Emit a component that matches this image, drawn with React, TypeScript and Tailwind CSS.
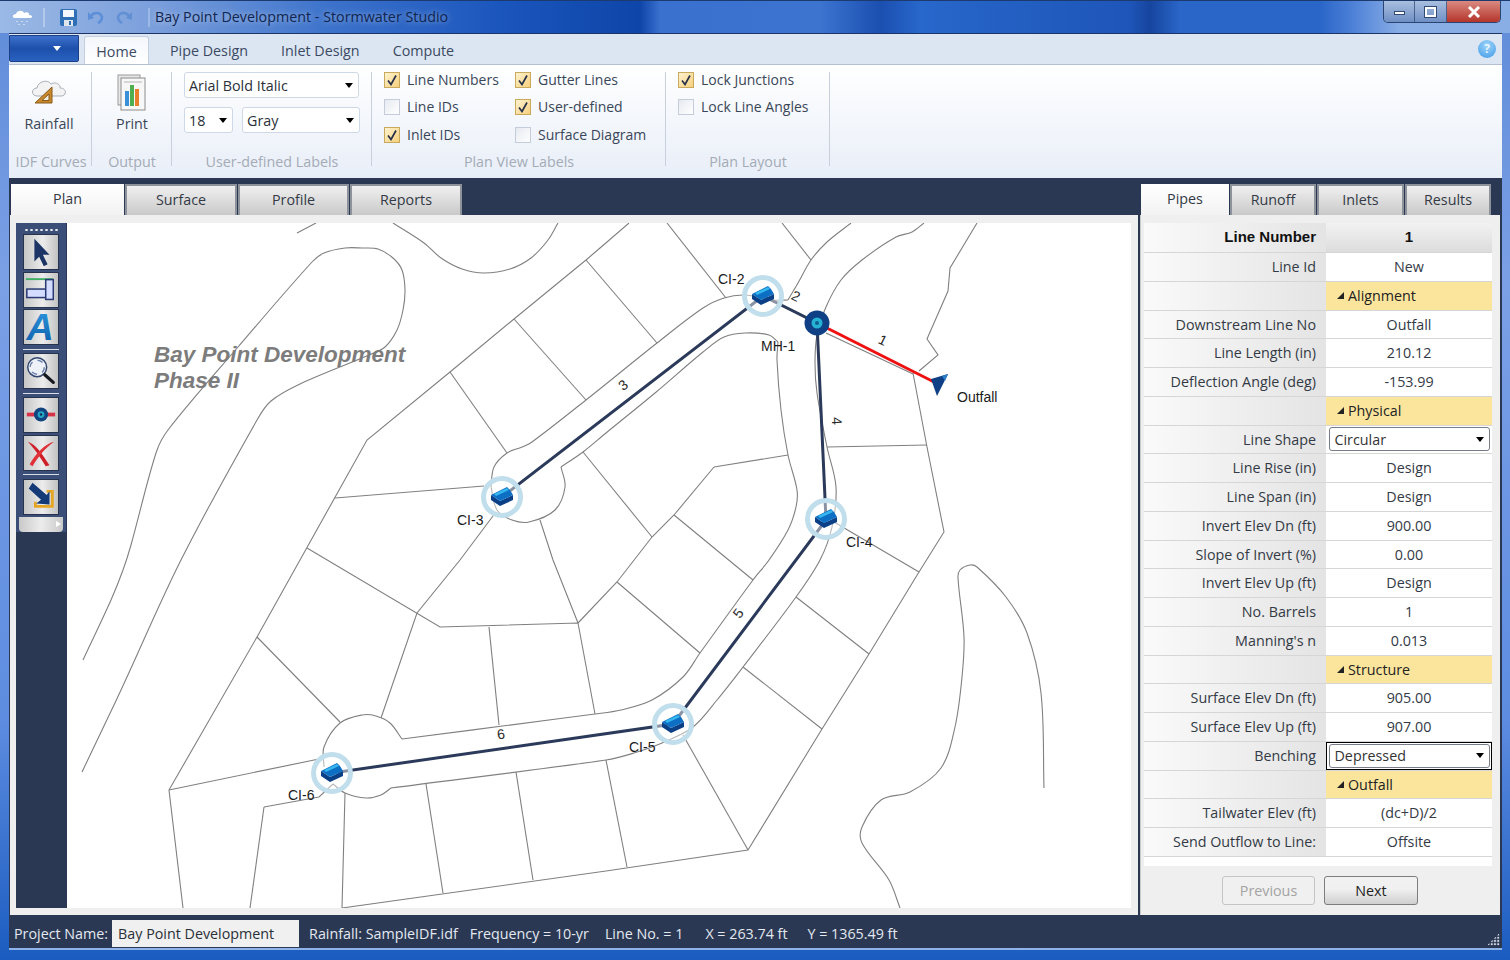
const UI_FONT = "font-['Open_Sans',sans-serif]";

// straight parcel and lot lines, in page coordinates
const parcels: string[] = [
  "297,233 316,223",
  "629,223 600,248 586,260 514,319 450,372 367,440 300,560 257,637 169,790 183,908",
  "450,372 507,453",
  "514,319 586,400",
  "586,260 657,343",
  "335,498 484,486",
  "307,548 440,627 578,623 595,714",
  "496,512 460,560 417,613 381,718",
  "583,452 652,537",
  "540,520 553,560 578,623",
  "714,467 788,455",
  "714,467 674,515 652,537 617,582 578,623",
  "674,515 753,580",
  "617,582 700,653",
  "489,627 499,725",
  "257,637 340,722",
  "169,790 319,759",
  "264,807 250,908",
  "264,807 319,797 333,784",
  "345,793 342,908 606,871 748,850 822,729 869,654 919,572 944,532 927,447 913,373",
  "426,784 443,893",
  "516,772 533,880",
  "606,760 627,867",
  "683,735 748,850",
  "827,447 927,445",
  "834,522 919,572",
  "796,597 869,654",
  "743,667 822,729",
  "667,223 726,298",
  "782,223 811,260",
  "977,223 950,268 948,291 927,339 938,355 919,371",
  "826,333 913,374",
];

// road edges and shoreline, drawn as smooth curves
const curves: number[][][] = [
  [[393,223],[424,243],[441,258],[462,269],[484,273],[510,269],[531,258],[548,240],[558,223]],
  [[83,660],[111,600],[123,570],[131,545],[156,453],[168,430],[238,347],[312,262],[324,253],[345,248],[362,248],[378,249],[393,258],[402,270],[405,290],[403,310],[397,330],[385,347],[369,355],[300,384],[271,401],[257,420],[181,560],[121,690],[82,772]],
  [[491,487],[494,467],[507,453],[522,447],[532,442],[586,400],[657,343],[703,308],[724,298],[745,295],[772,300],[788,300]],
  [[788,300],[798,283],[811,260],[827,242],[851,223]],
  [[491,487],[497,510],[512,520],[529,522],[555,510],[565,487],[561,467]],
  [[561,467],[583,452],[606,433],[655,393],[703,352],[724,337],[745,333],[769,335],[778,342]],
  [[778,342],[777,360],[781,410],[788,455],[797,490],[796,507],[788,530],[769,560],[753,580],[700,653],[683,677],[652,700],[621,710],[595,714],[402,739]],
  [[402,739],[390,723],[376,716],[362,715],[340,723],[324,747],[324,767]],
  [[333,784],[345,793],[366,798],[381,795],[391,788]],
  [[391,788],[606,760],[634,753],[662,743],[693,727],[717,700],[743,667],[796,597],[820,560],[832,527],[836,487],[827,447],[817,393],[815,363],[817,335],[826,307],[841,280],[862,260],[896,237],[912,232],[924,223]],
  [[900,908],[889,880],[862,843],[862,827],[881,800],[910,792],[941,768],[955,727],[962,677],[964,637],[958,578],[960,570],[970,565],[977,567],[1006,597],[1027,633],[1041,693],[1044,788]],
];

function smoothPath(pts: number[][]) {
  const tangent = (i: number) => {
    const a = pts[Math.max(i - 1, 0)];
    const b = pts[Math.min(i + 1, pts.length - 1)];
    const len = Math.hypot(b[0] - a[0], b[1] - a[1]) || 1;
    return [(b[0] - a[0]) / len, (b[1] - a[1]) / len];
  };
  let d = `M${pts[0][0]} ${pts[0][1]}`;
  for (let i = 0; i < pts.length - 1; i++) {
    const p = pts[i];
    const q = pts[i + 1];
    const len = Math.hypot(q[0] - p[0], q[1] - p[1]) / 3;
    const t1 = tangent(i);
    const t2 = tangent(i + 1);
    d += ` C${p[0] + t1[0] * len} ${p[1] + t1[1] * len} ${q[0] - t2[0] * len} ${q[1] - t2[1] * len} ${q[0]} ${q[1]}`;
  }
  return d;
}

const inlets = [
  { x: 763, y: 296 },
  { x: 502, y: 497 },
  { x: 826, y: 519 },
  { x: 673, y: 724 },
  { x: 332, y: 773 },
];

const nameLabels = [
  { text: "CI-2", x: 718, y: 284 },
  { text: "CI-3", x: 457, y: 525 },
  { text: "CI-4", x: 846, y: 547 },
  { text: "CI-5", x: 629, y: 752 },
  { text: "CI-6", x: 288, y: 800 },
  { text: "MH-1", x: 761, y: 351 },
  { text: "Outfall", x: 957, y: 402 },
];

const lineNumbers = [
  { text: "1", x: 883, y: 345, r: 26 },
  { text: "2", x: 796, y: 301, r: 26 },
  { text: "3", x: 623, y: 390, r: -38 },
  { text: "4", x: 837, y: 426, r: 87 },
  { text: "5", x: 738, y: 618, r: -53 },
  { text: "6", x: 501, y: 739, r: -8 },
];

type Row =
  | { kind: "head"; label: string; value: string }
  | { kind: "text"; label: string; value: string }
  | { kind: "section"; value: string }
  | { kind: "select"; label: string; value: string; focus?: boolean };

const rows: Row[] = [
  { kind: "head", label: "Line Number", value: "1" },
  { kind: "text", label: "Line Id", value: "New" },
  { kind: "section", value: "Alignment" },
  { kind: "text", label: "Downstream Line No", value: "Outfall" },
  { kind: "text", label: "Line Length (in)", value: "210.12" },
  { kind: "text", label: "Deflection Angle (deg)", value: "-153.99" },
  { kind: "section", value: "Physical" },
  { kind: "select", label: "Line Shape", value: "Circular" },
  { kind: "text", label: "Line Rise (in)", value: "Design" },
  { kind: "text", label: "Line Span (in)", value: "Design" },
  { kind: "text", label: "Invert Elev Dn (ft)", value: "900.00" },
  { kind: "text", label: "Slope of Invert (%)", value: "0.00" },
  { kind: "text", label: "Invert Elev Up (ft)", value: "Design" },
  { kind: "text", label: "No. Barrels", value: "1" },
  { kind: "text", label: "Manning's n", value: "0.013" },
  { kind: "section", value: "Structure" },
  { kind: "text", label: "Surface Elev Dn (ft)", value: "905.00" },
  { kind: "text", label: "Surface Elev Up (ft)", value: "907.00" },
  { kind: "select", label: "Benching", value: "Depressed", focus: true },
  { kind: "section", value: "Outfall" },
  { kind: "text", label: "Tailwater Elev (ft)", value: "(dc+D)/2" },
  { kind: "text", label: "Send Outflow to Line:", value: "Offsite" },
];

function Arrow() {
  return <span className="h-0 w-0 border-x-[4px] border-t-[5px] border-x-transparent border-t-black" />;
}

function Combo({ label, className }: { label: string; className: string }) {
  return (
    <div className={`flex h-[26px] items-center justify-between rounded-[3px] border border-[#cfd8e6] bg-white pl-[4px] pr-[5px] text-[14.3px] text-[#2a2f38] ${className}`}>
      <span className="pt-px">{label}</span>
      <Arrow />
    </div>
  );
}

function Check({ label, checked }: { label: string; checked?: boolean }) {
  return (
    <div className="flex h-[27px] items-center gap-[7px] whitespace-nowrap text-[14px] text-[#3a4658]">
      {checked ? (
        <span className="flex h-[16px] w-[16px] items-center justify-center border border-[#c9a95c] bg-[linear-gradient(135deg,#fff3d0,#f6cf7c)]">
          <svg width="12" height="12" viewBox="0 0 12 12">
            <path d="M2 6.5 L5 10.5 L10 1.5" fill="none" stroke="#26304a" strokeWidth="1.7" />
          </svg>
        </span>
      ) : (
        <span className="h-[16px] w-[16px] border border-[#c5cddb] bg-[linear-gradient(135deg,#e6eaf0,#ffffff)]" />
      )}
      <span>{label}</span>
    </div>
  );
}

function RibbonGroup({ label, width, children }: { label: string; width: string; children: React.ReactNode }) {
  return (
    <div className={`relative flex h-full flex-col ${width}`}>
      <div className="flex-1">{children}</div>
      <div className="h-[28px] pt-[1px] text-center text-[14.3px] text-[#a4abb6]">{label}</div>
      <span className="absolute right-0 top-[7px] h-[94px] w-px bg-[#c8d0dc]" />
    </div>
  );
}

function Tab({ label, width, active }: { label: string; width: string; active?: boolean }) {
  return (
    <div
      className={`flex h-[31px] items-center justify-center pb-[2px] text-[14.3px] text-[#333a45] ${width} ${
        active
          ? "bg-[linear-gradient(180deg,#ffffff,#f2f2f2)]"
          : "border-x-2 border-t-2 border-[#8e929a] bg-[linear-gradient(180deg,#f0f0f0,#c9c9c9)]"
      }`}
    >
      {label}
    </div>
  );
}

function ToolButton({ children }: { children: React.ReactNode }) {
  return (
    <div className="h-[36px] w-[36px] border border-[#26324e] bg-[linear-gradient(90deg,#c6c6c6,#ececec_55%,#c2c2c2)]">
      {children}
    </div>
  );
}

function ToolSeparator() {
  return <div className="my-[3.5px] h-px w-[36px] bg-[#d8dce4]" />;
}

function Toolbar() {
  return (
    <div className="flex w-[51px] shrink-0 flex-col bg-[#2a3853]">
      <div className="flex w-[50px] flex-col items-center bg-[#3b4e78] pb-0 pt-[5px]">
        <div className="mb-[2px] h-[4px] w-[34px] bg-[radial-gradient(circle,#e6e9ef_1px,transparent_1.4px)] bg-[length:5px_4px]" />
        <div className="flex flex-col gap-[1.5px]">
          <ToolButton>
            <svg viewBox="0 0 36 36" className="h-full w-full">
              <path d="M11 4 L27 21 L20 21 L25 31 L21 33 L16 23 L11 28 Z" fill="#1d3566" />
            </svg>
          </ToolButton>
          <ToolButton>
            <svg viewBox="0 0 36 36" className="h-full w-full">
              <path d="M2 6.5 H31" stroke="#3fae63" strokeWidth="2" />
              <rect x="3" y="17" width="21" height="9" fill="#d4dcff" stroke="#2b3a72" strokeWidth="1.6" />
              <rect x="23" y="7" width="8" height="21" fill="#d4dcff" stroke="#2b3a72" strokeWidth="1.6" />
            </svg>
          </ToolButton>
          <ToolButton>
            <svg viewBox="0 0 36 36" className="h-full w-full overflow-visible">
              <defs>
                <linearGradient id="letterA" x1="0" y1="0" x2="0" y2="1">
                  <stop offset="0" stopColor="#2f9be0" />
                  <stop offset="1" stopColor="#0a5aa8" />
                </linearGradient>
              </defs>
              <text x="17" y="32" textAnchor="middle" fontFamily="Liberation Sans" fontWeight="700" fontStyle="italic" fontSize="40" fill="url(#letterA)">
                A
              </text>
            </svg>
          </ToolButton>
        </div>
        <ToolSeparator />
        <ToolButton>
          <svg viewBox="0 0 36 36" className="h-full w-full">
            <circle cx="14" cy="14" r="10" fill="#eef1f7" stroke="#33476f" strokeWidth="1.6" />
            <circle cx="14" cy="14" r="7.5" fill="none" stroke="#6d83ad" strokeWidth="1.6" strokeDasharray="6 5.8" />
            <path d="M22 22 L31 30" stroke="#15181f" strokeWidth="3.4" strokeLinecap="round" />
          </svg>
        </ToolButton>
        <ToolSeparator />
        <div className="flex flex-col gap-[1.5px]">
          <ToolButton>
            <svg viewBox="0 0 36 36" className="h-full w-full">
              <path d="M3 17.5 H33" stroke="#d63348" strokeWidth="4" />
              <circle cx="18" cy="17.5" r="7.5" fill="#12457f" />
              <circle cx="18" cy="17.5" r="3.6" fill="#22a7c9" />
              <circle cx="18" cy="17.5" r="1.3" fill="#0c2c50" />
            </svg>
          </ToolButton>
          <ToolButton>
            <svg viewBox="0 0 36 36" className="h-full w-full">
              <path d="M4 6 C12 8 20 20 27 31 L23 32 C17 22 10 12 4 6 Z" fill="#cf1f28" />
              <path d="M32 6 C22 8 12 19 6 30 L9 32 C15 22 23 12 32 6 Z" fill="#e03038" />
            </svg>
          </ToolButton>
        </div>
        <ToolSeparator />
        <ToolButton>
          <svg viewBox="0 0 36 36" className="h-full w-full">
            <path d="M24 12 H30 V28 H12 V23" fill="none" stroke="#e5a623" strokeWidth="3" />
            <path d="M9 3 L24 16 L27 12 L27 26 L13 25 L18 21 L5 9 Z" fill="#143a78" />
          </svg>
        </ToolButton>
        <div className="mt-[2px] flex h-[15px] w-[44px] items-center justify-end rounded-b-[4px] bg-[linear-gradient(90deg,#c9c9c9,#ececec,#c9c9c9)] pr-[2px]">
          <span className="h-0 w-0 border-y-[3px] border-l-[5px] border-y-transparent border-l-white" />
        </div>
      </div>
    </div>
  );
}

function InletMark({ x, y }: { x: number; y: number }) {
  return (
    <g transform={`translate(${x} ${y})`}>
      <circle r="18.5" fill="#ffffff" fillOpacity="0.45" stroke="#c0deeb" strokeWidth="5" />
      <polygon points="-11,-2 -11,3 -2,9 11,3 11,-2 -2,4" fill="#0b3f86" />
      <polygon points="-11,-2 5,-10 8,-7 11,-2 -2,4" fill="#0d6fc4" />
      <polygon points="-8,-3 5,-9 7,-7 -6,-1" fill="#35b6ee" />
    </g>
  );
}

function PlanDrawing() {
  return (
    <svg viewBox="67 223 1064 685" className="block h-full w-full" fontFamily="Liberation Sans, sans-serif">
      {parcels.map((points) => (
        <polyline key={points} points={points} fill="none" stroke="#808080" strokeWidth="1.1" />
      ))}
      {curves.map((pts) => (
        <path key={pts.join()} d={smoothPath(pts)} fill="none" stroke="#808080" strokeWidth="1.1" />
      ))}
      <text fontSize="22.5" fontWeight="700" fontStyle="italic" fill="#7c7c7c">
        <tspan x="154" y="362">Bay Point Development</tspan>
        <tspan x="154" y="388">Phase II</tspan>
      </text>
      <polyline points="502,497 763,296 817,323 826,520 673,724 332,773" fill="none" stroke="#2b3a5a" strokeWidth="3" />
      <line x1="817" y1="323" x2="938" y2="384" stroke="#ee1111" strokeWidth="3" />
      {inlets.map((inlet) => (
        <InletMark key={inlet.x} x={inlet.x} y={inlet.y} />
      ))}
      <circle cx="817" cy="323" r="12.5" fill="#0f3f85" />
      <circle cx="817" cy="323" r="5.5" fill="#26b2d4" />
      <circle cx="817" cy="323" r="2" fill="#0f5f90" />
      <polygon points="931,379 948,374 937,396" fill="#0f3f85" />
      <polygon points="942,376 948,374 945,381" fill="#2a7fc6" />
      {nameLabels.map((label) => (
        <text key={label.text} x={label.x} y={label.y} fontSize="14" fill="#1a1a1a">
          {label.text}
        </text>
      ))}
      {lineNumbers.map((label) => (
        <text
          key={label.text}
          x={label.x}
          y={label.y}
          fontSize="14"
          fill="#2a2a2a"
          textAnchor="middle"
          transform={`rotate(${label.r} ${label.x} ${label.y - 5})`}
        >
          {label.text}
        </text>
      ))}
    </svg>
  );
}

function SelectCell({ value, focus }: { value: string; focus?: boolean }) {
  return (
    <div className={`flex h-full w-full items-center justify-center bg-white ${focus ? "border-[1.5px] border-black" : ""}`}>
      <div className="flex h-[24px] w-[161px] items-center justify-between rounded-[3px] border border-[#777c86] pl-[5px] pr-[5px] text-[14.3px] leading-none text-[#333]">
        <span className="pt-[2px]">{value}</span>
        <Arrow />
      </div>
    </div>
  );
}

function PropertyRow({ row }: { row: Row }) {
  const height = row.kind === "head" ? "h-[30px]" : "h-[28.75px]";
  const label = row.kind === "section" ? "" : row.label;
  return (
    <div className={`flex border-b border-[#d6d6d6] text-[14.3px] text-[#333a45] ${height}`}>
      <div
        className={`flex w-[182px] items-center justify-end bg-[linear-gradient(90deg,#fafafa,#e4e4e4)] pr-[10px] ${
          row.kind === "head" ? "font-['Liberation_Sans',sans-serif] text-[15px] font-bold text-[#111]" : ""
        }`}
      >
        {label}
      </div>
      {row.kind === "section" && (
        <div className="flex flex-1 items-center gap-[4px] bg-[#fbe59d] pl-[11px] text-[#222]">
          <span className="h-0 w-0 border-b-[7px] border-l-[7px] border-b-[#222] border-l-transparent" />
          {row.value}
        </div>
      )}
      {row.kind === "text" && <div className="flex flex-1 items-center justify-center bg-white">{row.value}</div>}
      {row.kind === "head" && (
        <div className="flex flex-1 items-center justify-center bg-[linear-gradient(180deg,#f2f2f2,#dcdcdc)] font-['Liberation_Sans',sans-serif] text-[15px] font-bold text-[#111]">
          {row.value}
        </div>
      )}
      {row.kind === "select" && (
        <div className="flex-1">
          <SelectCell value={row.value} focus={row.focus} />
        </div>
      )}
    </div>
  );
}

export default function App() {
  return (
    <div className={`flex h-[960px] w-[1510px] flex-col overflow-hidden bg-[linear-gradient(180deg,#5f8bd8,#7ba0e6_30%,#5d8ce0_75%,#1b5cc0)] ${UI_FONT}`}>
      {/* title bar */}
      <div className="flex h-[33px] shrink-0 border-t border-[#1c3a6e] bg-[linear-gradient(90deg,#9bb9e5_0,#7ca0dc_150px,#3c72cb_330px,#1b56bd_500px,#0e45a8_640px,#3a70ce_660px,#3c74d0_820px,#1b4fb0_880px,#2867cb_920px,#1e55b8_1130px,#16459f_1150px,#2a66c8_1180px,#2a66c8_1320px,#4a7ed6_1350px,#89aee6_1400px)]">
        <div className="flex items-center pl-[12px]">
          <svg width="22" height="20" viewBox="0 0 22 20">
            <path d="M3 11 C0 11 0 7 4 7 C5 3 11 3 12 6 C15 4 18 6 17 8 C21 8 21 11 18 11 Z" fill="#ffffff" />
            <path d="M5 14 v2 M10 14 v2 M15 14 v2 M7 17 v2 M12 17 v2" stroke="#ffffff" strokeWidth="1" strokeDasharray="1 1" />
          </svg>
          <span className="ml-[9px] h-[19px] w-[2px] bg-white/30" />
          <svg className="ml-[14px]" width="19" height="19" viewBox="0 0 19 19">
            <rect x="1" y="1" width="17" height="17" rx="2" fill="#2f6fb5" />
            <rect x="4" y="2" width="11" height="7" fill="#f4f7fb" />
            <rect x="5" y="12" width="9" height="6" fill="#dfe6ee" />
            <rect x="10" y="13" width="2" height="4" fill="#2f6fb5" />
          </svg>
          <svg className="ml-[9px]" width="18" height="16" viewBox="0 0 18 16">
            <path d="M3 9 C5 3 13 2 15 8 C15 11 13 13 11 14" fill="none" stroke="#5d8fd8" strokeWidth="2.6" />
            <path d="M1 3 L7 9 L1 11 Z" fill="#5d8fd8" />
          </svg>
          <svg className="ml-[10px] opacity-60" width="18" height="16" viewBox="0 0 18 16">
            <path d="M15 9 C13 3 5 2 3 8 C3 11 5 13 7 14" fill="none" stroke="#4f83cf" strokeWidth="2.6" />
            <path d="M17 3 L11 9 L17 11 Z" fill="#4f83cf" />
          </svg>
          <span className="ml-[15px] h-[19px] w-[2px] bg-white/25" />
          <span className="ml-[5px] text-[14.3px] text-[#10254f] [text-shadow:0_0_6px_rgba(255,255,255,0.55)]">
            Bay Point Development - Stormwater Studio
          </span>
        </div>
        <div className="ml-auto mr-[9px] flex h-[22px] overflow-hidden rounded-b-[5px] border border-t-0 border-[#2c4470]">
          <div className="flex w-[31px] items-center justify-center border-r border-[#2c4470]/70 bg-[linear-gradient(180deg,#a9bfdf,#6f8fc4)]">
            <span className="mt-[3px] h-[4px] w-[11px] border border-[#334a72] bg-white" />
          </div>
          <div className="flex w-[32px] items-center justify-center border-r border-[#2c4470]/70 bg-[linear-gradient(180deg,#a9bfdf,#6f8fc4)]">
            <span className="h-[10px] w-[11px] border-2 border-white outline outline-1 outline-[#334a72]" />
          </div>
          <div className="flex w-[53px] items-center justify-center bg-[linear-gradient(180deg,#d98a80,#b5352b)]">
            <svg width="14" height="12" viewBox="0 0 14 12">
              <path d="M2 1 L12 11 M12 1 L2 11" stroke="#ffffff" strokeWidth="3" />
            </svg>
          </div>
        </div>
      </div>

      <div className="ml-[9px] flex h-[917px] w-[1493px] shrink-0 flex-col">
        {/* ribbon tabs */}
        <div className="flex h-[32px] shrink-0 items-end border-y border-b-[#b4c0d2] border-t-[#1d3566] bg-[#dce6f3] text-[14.3px] text-[#3b4a62]">
          <div className="mb-[2px] flex h-[27px] w-[70px] items-center justify-center rounded-b-[2px] border border-[#1d3f86] bg-[linear-gradient(180deg,#3d71cc,#1d50ab_50%,#2a62c0)] pl-[25px]">
            <span className="h-0 w-0 border-x-[4px] border-t-[5px] border-x-transparent border-t-white" />
          </div>
          <div className="ml-[5px] flex h-[28px] w-[65px] items-center justify-center rounded-t-[3px] border-x border-t border-[#c4cfdf] bg-[linear-gradient(180deg,#f3f6fb,#ffffff)] pt-[2px]">
            Home
          </div>
          <div className="ml-[21px] flex h-[28px] items-center pt-[2px]">Pipe Design</div>
          <div className="ml-[33px] flex h-[28px] items-center pt-[2px]">Inlet Design</div>
          <div className="ml-[33px] flex h-[28px] items-center pt-[2px]">Compute</div>
          <div className="mb-[6px] ml-auto mr-[6px] flex h-[18px] w-[18px] items-center justify-center rounded-full bg-[radial-gradient(circle_at_50%_30%,#9ed4fa,#3f9ae6)] text-[12px] font-bold text-white/80">
            ?
          </div>
        </div>

        {/* ribbon body */}
        <div className="flex h-[113px] shrink-0 bg-[linear-gradient(180deg,#ffffff,#e8eef8)] pl-px">
          <RibbonGroup label="IDF Curves" width="w-[82px]">
            <div className="flex flex-col items-center pr-[4px] pt-[13px] text-[14.3px] text-[#3a4658]">
              <svg width="36" height="26" viewBox="0 0 36 26">
                <path d="M6 18 C0 18 0 10 6 10 C7 3 17 1 20 6 C25 3 30 7 29 10 C36 10 36 18 30 18 Z" fill="#f3f3f3" stroke="#a9afb8" />
                <path d="M21 9 L21 25 L4 25 Z" fill="#c8882e" stroke="#8a5a18" />
                <path d="M18 16 L18 22.5 L11 22.5 Z" fill="#f1efe6" stroke="#8a5a18" />
              </svg>
              <span className="mt-[9px]">Rainfall</span>
            </div>
          </RibbonGroup>
          <RibbonGroup label="Output" width="w-[80px]">
            <div className="flex flex-col items-center pt-[9px] text-[14.3px] text-[#3a4658]">
              <svg width="30" height="38" viewBox="0 0 30 38">
                <rect x="1" y="1" width="22" height="30" fill="#e8e8e8" stroke="#9a9a9a" />
                <rect x="4" y="4" width="24" height="32" fill="#f7f7f7" stroke="#8c8c8c" />
                <rect x="8" y="17" width="4" height="15" fill="#3a8fd6" />
                <rect x="13" y="11" width="4" height="21" fill="#4fae4f" />
                <rect x="18" y="15" width="4" height="17" fill="#e77f2d" />
                <path d="M7 8 H25" stroke="#b5b5b5" />
              </svg>
              <span className="mt-[1px]">Print</span>
            </div>
          </RibbonGroup>
          <RibbonGroup label="User-defined Labels" width="w-[200px]">
            <div className="flex flex-col gap-[9px] pl-[12px] pt-[7px]">
              <Combo label="Arial Bold Italic" className="w-[175px]" />
              <div className="flex gap-[9px]">
                <Combo label="18" className="w-[49px]" />
                <Combo label="Gray" className="w-[118px]" />
              </div>
            </div>
          </RibbonGroup>
          <RibbonGroup label="Plan View Labels" width="w-[294px]">
            <div className="flex pl-[12px] pt-[1px]">
              <div className="w-[131px]">
                <Check label="Line Numbers" checked />
                <Check label="Line IDs" />
                <div className="pt-px">
                  <Check label="Inlet IDs" checked />
                </div>
              </div>
              <div>
                <Check label="Gutter Lines" checked />
                <Check label="User-defined" checked />
                <div className="pt-px">
                  <Check label="Surface Diagram" />
                </div>
              </div>
            </div>
          </RibbonGroup>
          <RibbonGroup label="Plan Layout" width="w-[164px]">
            <div className="pl-[12px] pt-[1px]">
              <Check label="Lock Junctions" checked />
              <Check label="Lock Line Angles" />
            </div>
          </RibbonGroup>
        </div>

        {/* workspace */}
        <div className="flex h-[737px] shrink-0 gap-[2px] bg-[#2a3853] pl-px pt-[6px]">
          <div className="flex w-[1128px] flex-col">
            <div className="flex gap-px pl-px">
              <Tab label="Plan" width="w-[113px]" active />
              <Tab label="Surface" width="w-[112px]" />
              <Tab label="Profile" width="w-[111px]" />
              <Tab label="Reports" width="w-[112px]" />
            </div>
            <div className="flex h-[700px] bg-[#efefef] pb-[7px] pl-[6px] pr-[7px] pt-[8px]">
              <Toolbar />
              <div className="flex-1 bg-white">
                <PlanDrawing />
              </div>
            </div>
          </div>
          <div className="flex w-[360px] flex-col">
            <div className="flex gap-px pl-px">
              <Tab label="Pipes" width="w-[88px]" active />
              <Tab label="Runoff" width="w-[86px]" />
              <Tab label="Inlets" width="w-[87px]" />
              <Tab label="Results" width="w-[86px]" />
            </div>
            <div className="h-[700px] border-l border-[#c9c9c9] bg-[#efefef] pl-[3px] pr-[8px] pt-[8px]">
              {rows.map((row, i) => (
                <PropertyRow key={i} row={row} />
              ))}
              <div className="h-[9px] bg-white" />
              <div className="flex gap-[9px] pl-[78px] pt-[10px] text-[14.3px]">
                <div className="flex h-[29px] w-[93px] items-center justify-center rounded-[3px] border border-[#c4c4c4] bg-[#f0f0f0] text-[#a3a3a3]">
                  Previous
                </div>
                <div className="flex h-[29px] w-[94px] items-center justify-center rounded-[3px] border border-[#7d7d7d] bg-[linear-gradient(180deg,#f2f2f2,#f0f0f0_45%,#cfcfcf)] text-[#222]">
                  Next
                </div>
              </div>
            </div>
          </div>
        </div>

        {/* status bar */}
        <div className="flex h-[35px] shrink-0 items-center border-b-2 border-[#8fb4ea] bg-[#2a3853] pl-[5px] pt-[4px] text-[14.3px] text-[#e4e8f0]">
          <span>Project Name:</span>
          <div className="ml-[4px] flex h-[27px] w-[187px] items-center bg-[#f0f0f0] pl-[6px] text-[#2a2f38]">Bay Point Development</div>
          <span className="ml-[10px]">Rainfall: SampleIDF.idf</span>
          <span className="ml-[12px]">Frequency = 10-yr</span>
          <span className="ml-[16px]">Line No. = 1</span>
          <span className="ml-[22px]">X = 263.74 ft</span>
          <span className="ml-[20px]">Y = 1365.49 ft</span>
          <div className="ml-auto mr-[2px] mt-[11px] h-[13px] w-[13px] bg-[radial-gradient(circle,#d6dde9_1px,transparent_1.3px)] bg-[length:3.2px_3.2px] [clip-path:polygon(100%_0,100%_100%,0_100%)]" />
        </div>
      </div>
    </div>
  );
}
